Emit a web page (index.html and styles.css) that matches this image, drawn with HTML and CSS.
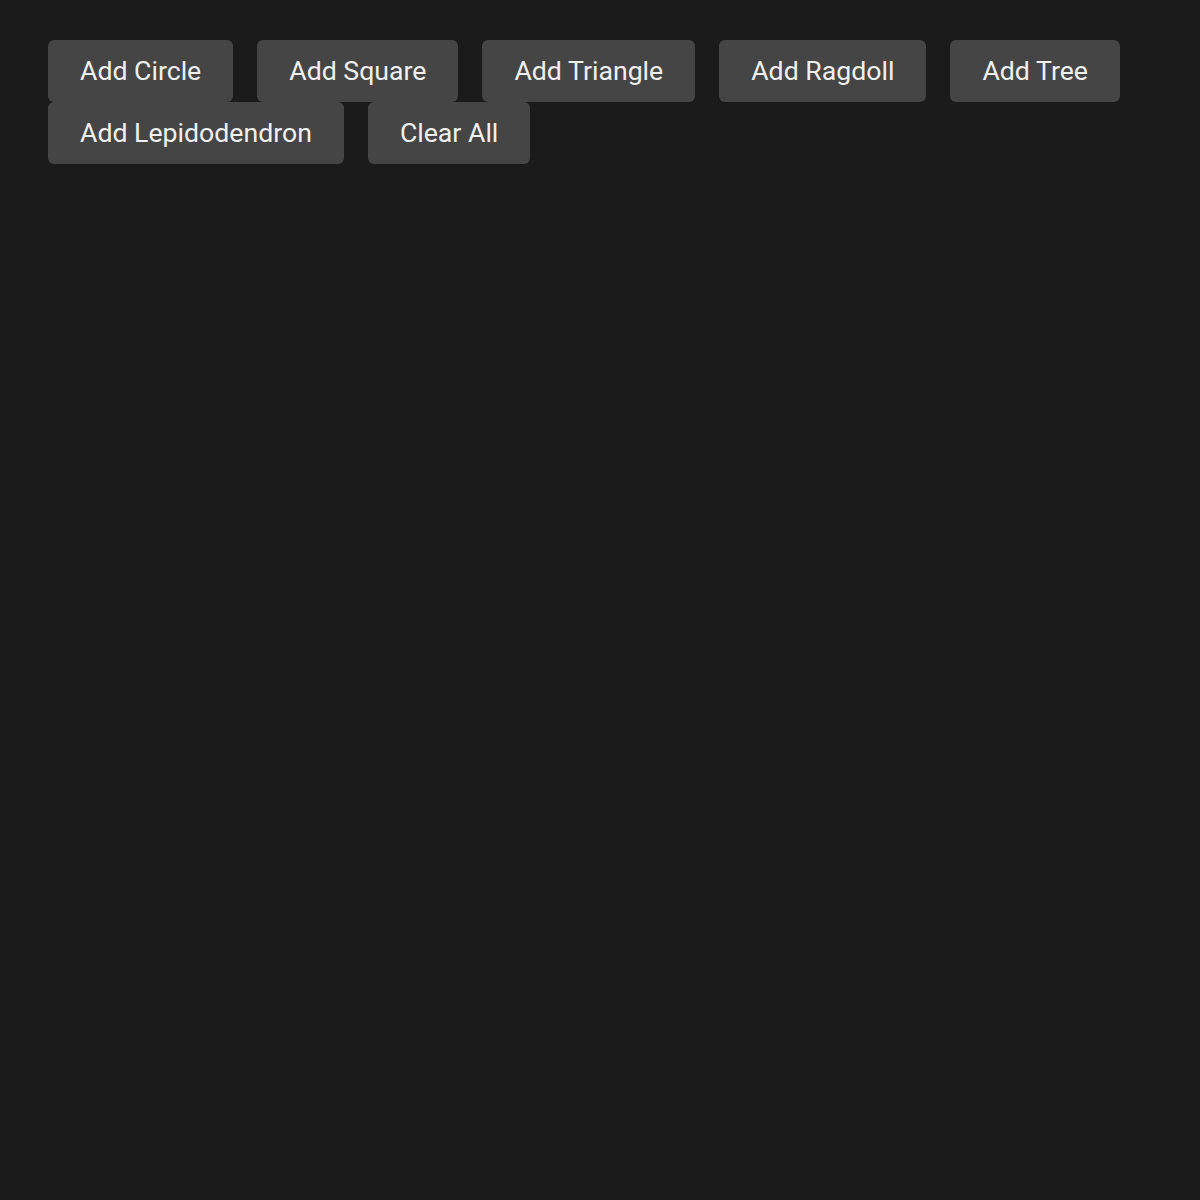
FILE: index.html
```html
<!DOCTYPE html>
<html lang="en">
<head>
<meta charset="utf-8">
<title>Physics Sandbox</title>
<link rel="stylesheet" href="styles.css">
</head>
<body>
  <div class="toolbar">
    <button class="btn">Add Circle</button>
    <button class="btn">Add Square</button>
    <button class="btn">Add Triangle</button>
    <button class="btn">Add Ragdoll</button>
    <button class="btn">Add Tree</button>
    <button class="btn">Add Lepidodendron</button>
    <button class="btn">Clear All</button>
  </div>
</body>
</html>
```

FILE: styles.css
```css
html, body {
  margin: 0;
  height: 100%;
  background: #1b1b1b;
}

body {
  font-family: Roboto, "Liberation Sans", sans-serif;
}

.toolbar {
  display: flex;
  flex-wrap: wrap;
  column-gap: 24px;
  row-gap: 0;
  padding: 40px 48px;
  max-width: 1100px;
}

.btn {
  font-family: inherit;
  font-size: 26.67px;
  line-height: 31px;
  color: #f0f0f0;
  background: #454545;
  border: none;
  border-radius: 6px;
  padding: 15.5px 32px;
  cursor: pointer;
}
```
